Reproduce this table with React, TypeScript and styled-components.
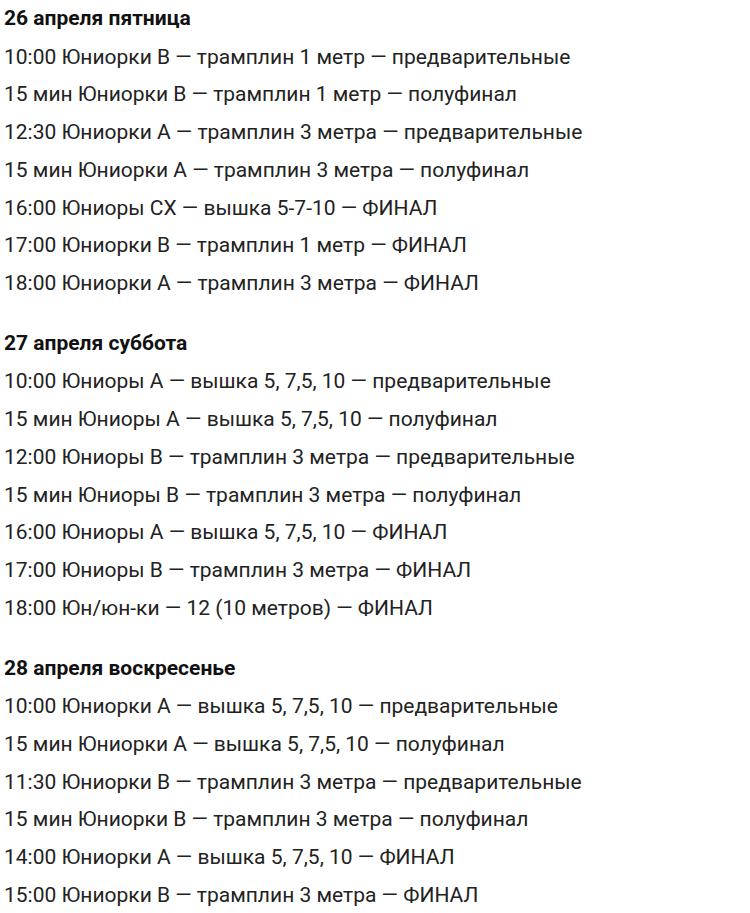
import React, {FC} from 'react';
import styled, {createGlobalStyle} from 'styled-components';

const GlobalStyle = createGlobalStyle`
  body {
    margin: 0;
    background: #ffffff;
    font-family: Roboto, "Liberation Sans", Arial, sans-serif;
  }
`

const Page = styled.div`
  padding: 0 4px;
  display: flex;
  flex-direction: column;
  gap: 22px;
`

const Section = styled.section`
  display: flex;
  flex-direction: column;
`

const DayTitle = styled.div`
  font-size: 21px;
  font-weight: 700;
  line-height: 36px;
  margin-bottom: 2.5px;
  color: #111;
`

const Row = styled.div`
  font-size: 21px;
  line-height: 37.75px;
  color: #222;
  white-space: nowrap;
`

interface Day {
  title: string
  rows: string[]
}

const schedule: Day[] = [
  {
    title: '26 апреля пятница',
    rows: [
      '10:00 Юниорки В — трамплин 1 метр — предварительные',
      '15 мин Юниорки В — трамплин 1 метр — полуфинал',
      '12:30 Юниорки А — трамплин 3 метра — предварительные',
      '15 мин Юниорки А — трамплин 3 метра — полуфинал',
      '16:00 Юниоры СХ — вышка 5-7-10 — ФИНАЛ',
      '17:00 Юниорки В — трамплин 1 метр — ФИНАЛ',
      '18:00 Юниорки А — трамплин 3 метра — ФИНАЛ',
    ],
  },
  {
    title: '27 апреля суббота',
    rows: [
      '10:00 Юниоры А — вышка 5, 7,5, 10 — предварительные',
      '15 мин Юниоры А — вышка 5, 7,5, 10 — полуфинал',
      '12:00 Юниоры В — трамплин 3 метра — предварительные',
      '15 мин Юниоры В — трамплин 3 метра — полуфинал',
      '16:00 Юниоры А — вышка 5, 7,5, 10 — ФИНАЛ',
      '17:00 Юниоры В — трамплин 3 метра — ФИНАЛ',
      '18:00 Юн/юн-ки — 12 (10 метров) — ФИНАЛ',
    ],
  },
  {
    title: '28 апреля воскресенье',
    rows: [
      '10:00 Юниорки А — вышка 5, 7,5, 10 — предварительные',
      '15 мин Юниорки А — вышка 5, 7,5, 10 — полуфинал',
      '11:30 Юниорки В — трамплин 3 метра — предварительные',
      '15 мин Юниорки В — трамплин 3 метра — полуфинал',
      '14:00 Юниорки А — вышка 5, 7,5, 10 — ФИНАЛ',
      '15:00 Юниорки В — трамплин 3 метра — ФИНАЛ',
    ],
  },
]

const App: FC = () =>
  <>
    <GlobalStyle/>
    <Page>
      {schedule.map(day =>
        <Section key={day.title}>
          <DayTitle>{day.title}</DayTitle>
          {day.rows.map((row, i) => <Row key={i}>{row}</Row>)}
        </Section>
      )}
    </Page>
  </>

export default App
